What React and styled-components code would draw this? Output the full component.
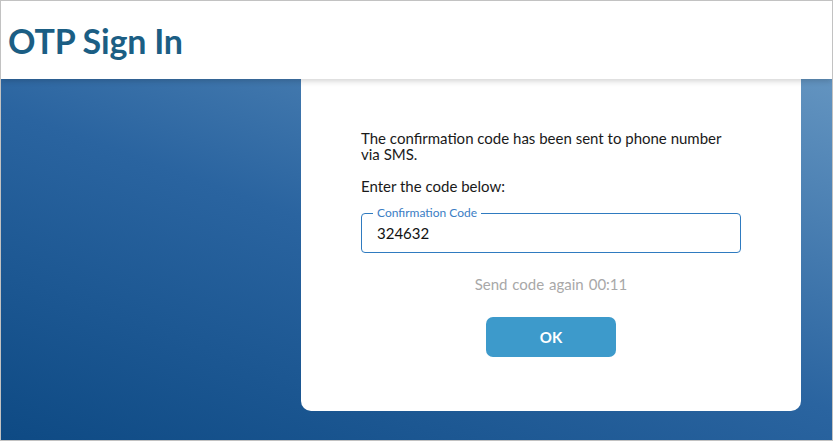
import React from 'react';
import styled, { createGlobalStyle } from 'styled-components';

const GlobalStyle = createGlobalStyle`
  html, body {
    margin: 0;
    padding: 0;
    background: #ffffff;
  }
  * {
    box-sizing: border-box;
  }
`;

const Frame = styled.div`
  width: 833px;
  height: 441px;
  border: 1px solid #c2c2c2;
  display: flex;
  flex-direction: column;
  overflow: hidden;
  font-family: 'Lato', 'Liberation Sans', sans-serif;
  position: relative;
`;

const Header = styled.header`
  height: 78px;
  flex: none;
  background: #ffffff;
  display: flex;
  align-items: center;
  padding-left: 7px;
  box-shadow: 0 2px 6px rgba(0, 0, 0, 0.18);
  position: relative;
  z-index: 2;
`;

const Title = styled.h1`
  margin: 0;
  font-size: 34px;
  font-weight: 700;
  color: #1b5e84;
  letter-spacing: -0.2px;
`;

const Main = styled.main`
  flex: 1;
  display: flex;
  justify-content: flex-end;
  padding: 0 31px 29px 0;
  background: linear-gradient(20deg, #0e4a84 0%, #2a64a0 50%, #6394c0 100%);
`;

const Card = styled.section`
  width: 500px;
  background: #ffffff;
  border-radius: 0 0 10px 10px;
  padding: 51px 60px 0;
  display: flex;
  flex-direction: column;
`;

const Text = styled.p`
  margin: 0 0 ${(p) => p.gap || 0}px;
  font-size: 15px;
  line-height: 16px;
  color: #1a1a1a;
`;

const Field = styled.div`
  position: relative;
  margin-top: 19px;
`;

const Legend = styled.label`
  position: absolute;
  top: -7px;
  left: 12px;
  padding: 0 4px;
  background: #ffffff;
  font-size: 12px;
  line-height: 13px;
  color: #3b7dc4;
`;

const Input = styled.input`
  display: block;
  width: 100%;
  height: 40px;
  border: 1px solid #2f7bc0;
  border-radius: 4px;
  padding: 0 15px;
  font-family: inherit;
  font-size: 15px;
  color: #111111;
  outline: none;
`;

const Resend = styled.div`
  margin-top: 23px;
  text-align: center;
  font-size: 15px;
  line-height: 16px;
  color: #a8a8a8;
  word-spacing: 1px;
`;

const Timer = styled.span`
  margin-left: 5px;
`;

const Button = styled.button`
  align-self: center;
  margin-top: 25px;
  width: 130px;
  height: 40px;
  border: none;
  border-radius: 7px;
  background: #3d9acb;
  color: #ffffff;
  font-family: inherit;
  font-size: 15px;
  font-weight: 700;
  cursor: pointer;
`;

export default function App() {
  return (
    <>
      <GlobalStyle />
      <Frame>
        <Header>
          <Title>OTP Sign In</Title>
        </Header>
        <Main>
          <Card>
            <Text gap={16}>
              The confirmation code has been sent to phone number via SMS.
            </Text>
            <Text>Enter the code below:</Text>
            <Field>
              <Legend htmlFor="otp">Confirmation Code</Legend>
              <Input id="otp" defaultValue="324632" />
            </Field>
            <Resend>
              Send code again<Timer>00:11</Timer>
            </Resend>
            <Button type="button">OK</Button>
          </Card>
        </Main>
      </Frame>
    </>
  );
}
